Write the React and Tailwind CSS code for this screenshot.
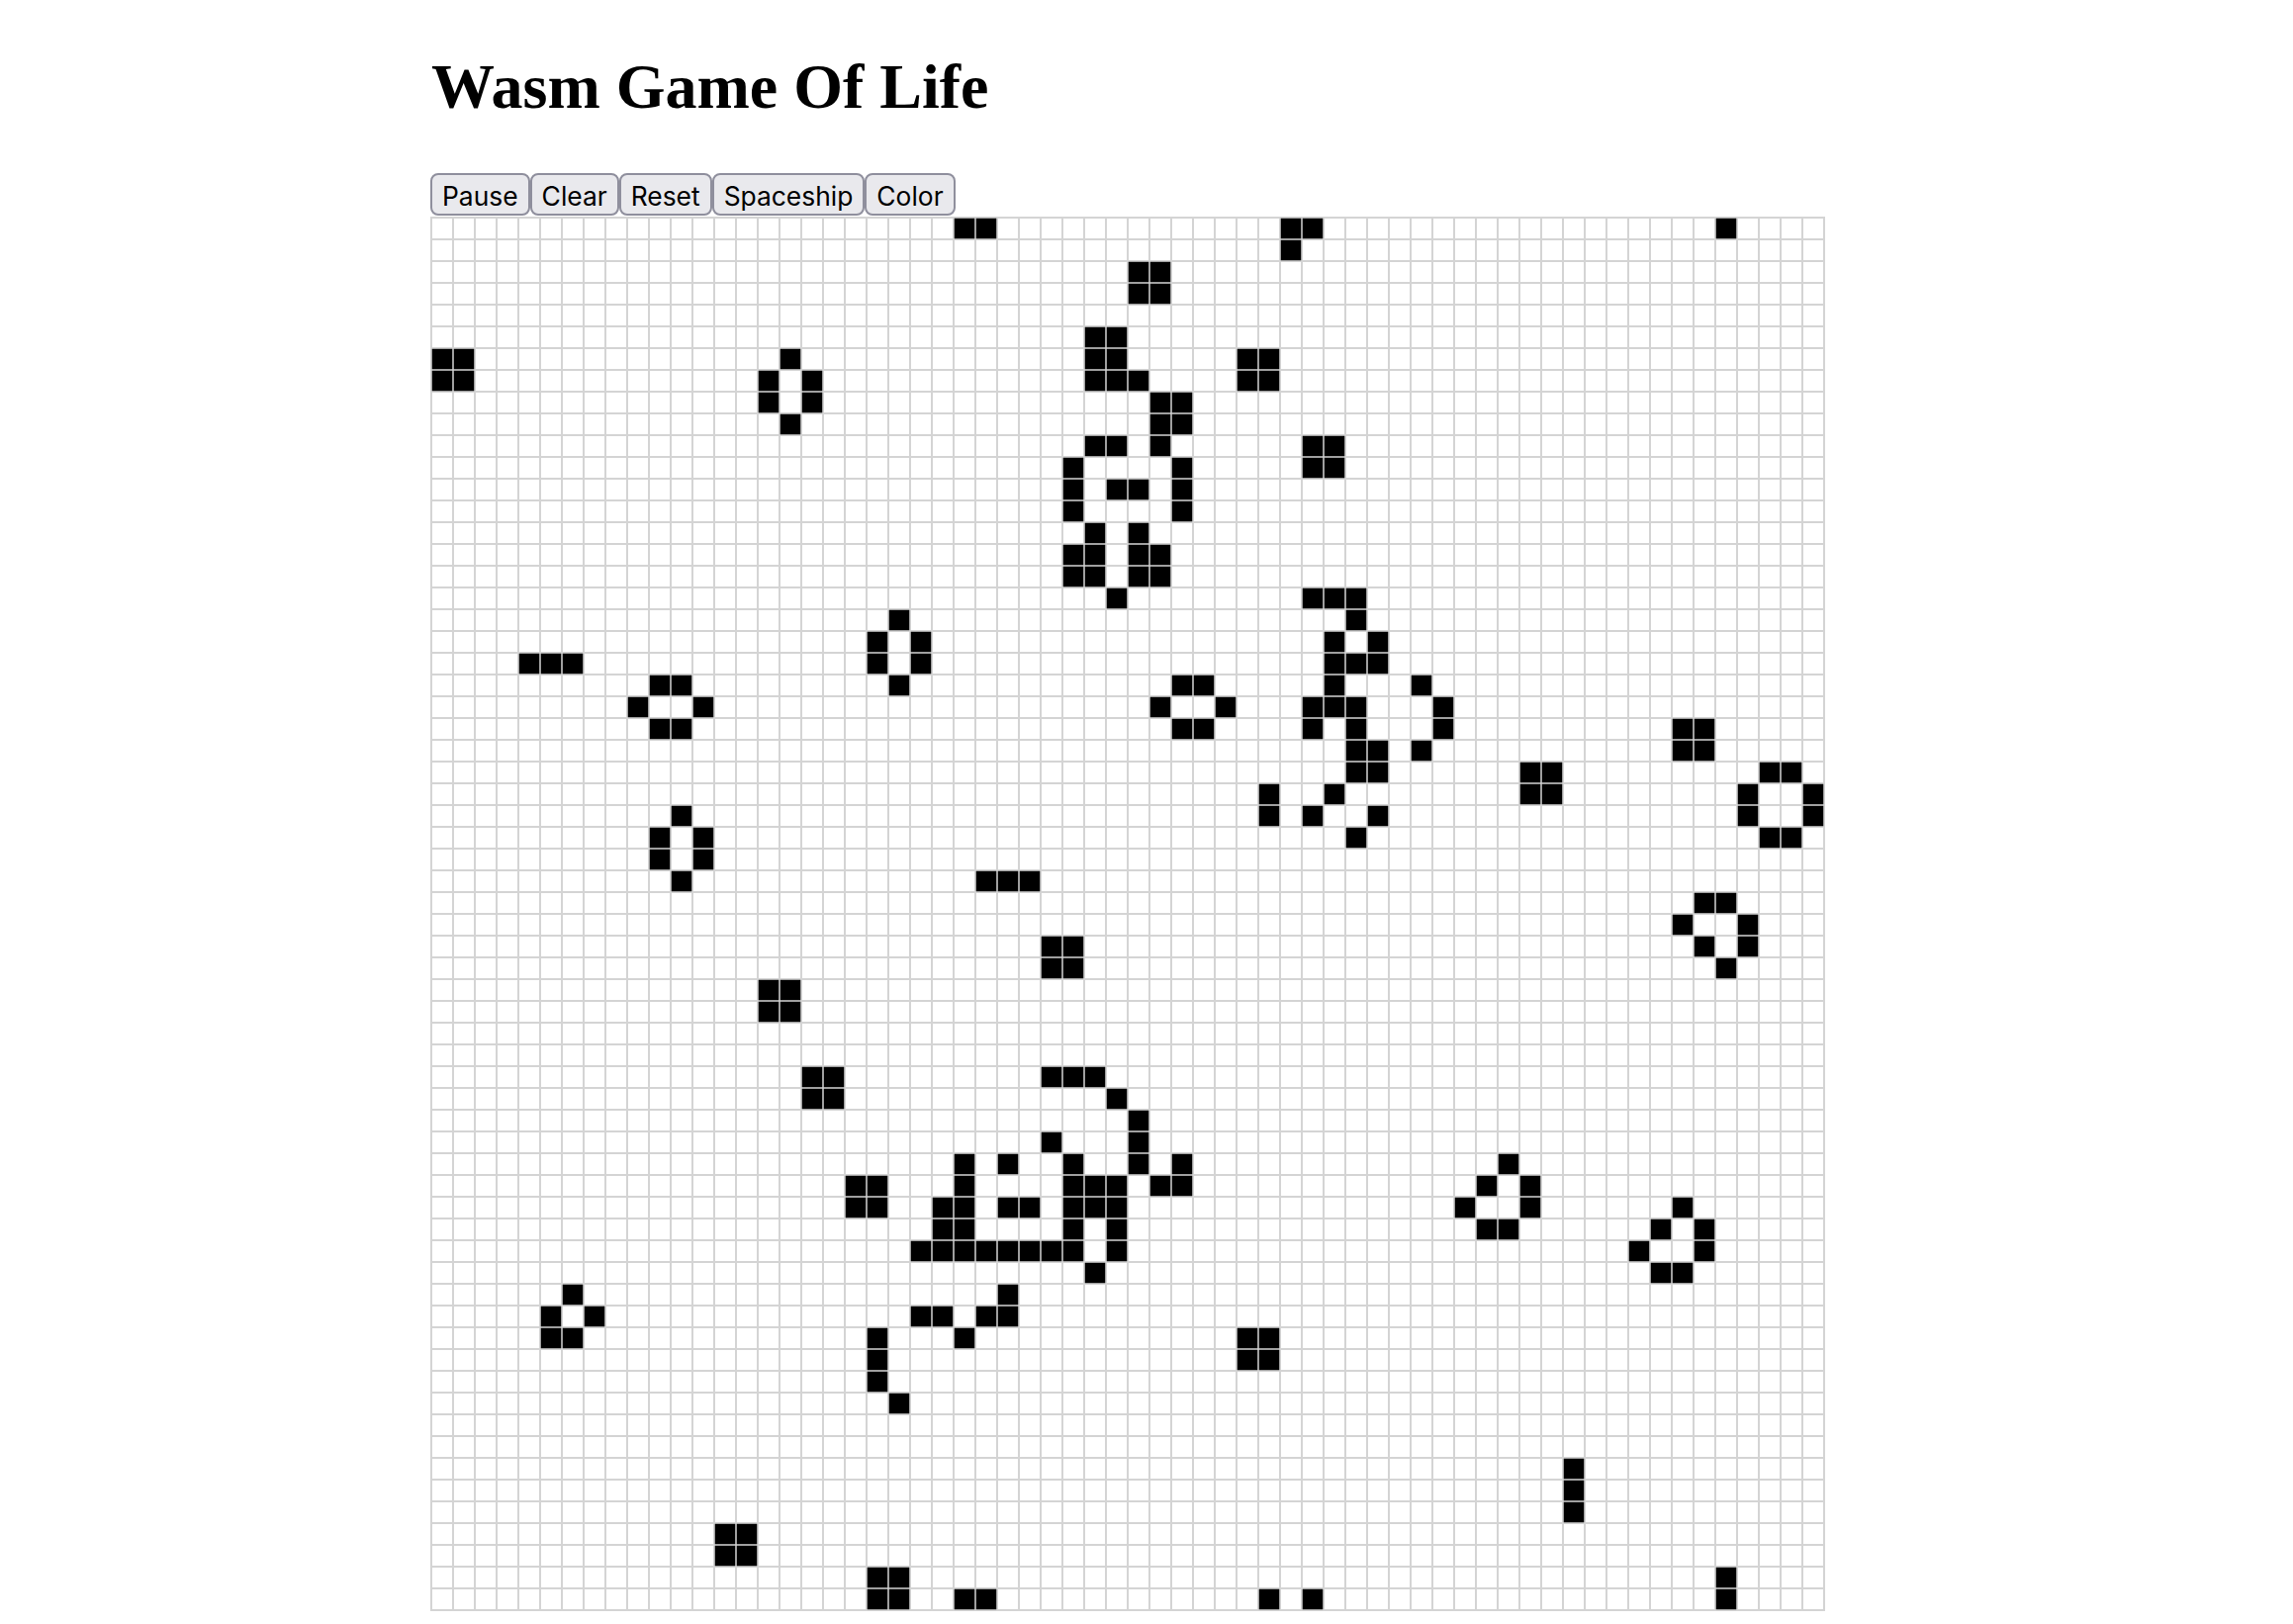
const PITCH = 22;
const SIZE = 64;

// live cells per row: [row, [cols]]
const LIVE = {
  0: [24, 25, 39, 40, 59],
  1: [39],
  2: [32, 33],
  3: [32, 33],
  5: [30, 31],
  6: [0, 1, 16, 30, 31, 37, 38],
  7: [0, 1, 15, 17, 30, 31, 32, 37, 38],
  8: [15, 17, 33, 34],
  9: [16, 33, 34],
  10: [30, 31, 33, 40, 41],
  11: [29, 34, 40, 41],
  12: [29, 31, 32, 34],
  13: [29, 34],
  14: [30, 32],
  15: [29, 30, 32, 33],
  16: [29, 30, 32, 33],
  17: [31, 40, 41, 42],
  18: [21, 42],
  19: [20, 22, 41, 43],
  20: [4, 5, 6, 20, 22, 41, 42, 43],
  21: [10, 11, 21, 34, 35, 41, 45],
  22: [9, 12, 33, 36, 40, 41, 42, 46],
  23: [10, 11, 34, 35, 40, 42, 46, 57, 58],
  24: [42, 43, 45, 57, 58],
  25: [42, 43, 50, 51, 61, 62],
  26: [38, 41, 50, 51, 60, 63],
  27: [11, 38, 40, 43, 60, 63],
  28: [10, 12, 42, 61, 62],
  29: [10, 12],
  30: [11, 25, 26, 27],
  31: [58, 59],
  32: [57, 60],
  33: [28, 29, 58, 60],
  34: [28, 29, 59],
  35: [15, 16],
  36: [15, 16],
  39: [17, 18, 28, 29, 30],
  40: [17, 18, 31],
  41: [32],
  42: [28, 32],
  43: [24, 26, 29, 32, 34, 49],
  44: [19, 20, 24, 29, 30, 31, 33, 34, 48, 50],
  45: [19, 20, 23, 24, 26, 27, 29, 30, 31, 47, 50, 57],
  46: [23, 24, 29, 31, 48, 49, 56, 58],
  47: [22, 23, 24, 25, 26, 27, 28, 29, 31, 55, 58],
  48: [30, 56, 57],
  49: [6, 26],
  50: [5, 7, 22, 23, 25, 26],
  51: [5, 6, 20, 24, 37, 38],
  52: [20, 37, 38],
  53: [20],
  54: [21],
  57: [52],
  58: [52],
  59: [52],
  60: [13, 14],
  61: [13, 14],
  62: [20, 21, 59],
  63: [20, 21, 24, 25, 38, 40, 59],
};

const Board = () => {
  const lines = [];
  for (let i = 0; i <= SIZE; i++) {
    const p = 1 + i * PITCH;
    lines.push(`M${p} 0V1410M0 ${p}H1410`);
  }

  const cells = [];
  Object.entries(LIVE).forEach(([row, cols]) => {
    cols.forEach((col) => {
      cells.push(
        <rect
          key={`${row}-${col}`}
          x={1.75 + col * PITCH}
          y={1.75 + Number(row) * PITCH}
          width="20.5"
          height="20.5"
          fill="#000000"
        />
      );
    });
  });

  return (
    <svg className="block mt-px" width="1410" height="1410" viewBox="0 0 1410 1410">
      <path d={lines.join('')} stroke="#d4d4d4" strokeWidth="2" fill="none" />
      {cells}
    </svg>
  );
};

const BUTTONS = ['Pause', 'Clear', 'Reset', 'Spaceship', 'Color'];

const App = () => {
  return (
    <div className="min-h-[1642px] bg-white pl-[435px]">
      <h1 className="pt-[51px] pl-px mb-[50px] text-[64px] leading-[74px] font-bold text-black font-['Liberation_Serif',serif]">
        Wasm Game Of Life
      </h1>
      <div className="flex">
        {BUTTONS.map((label) => (
          <button
            key={label}
            className="h-[43px] px-[10px] pt-[3px] bg-[#e9e9ed] border-2 border-[#8f8f9d] rounded-lg text-[26.4px] leading-none text-black font-['Inter',sans-serif]"
          >
            {label}
          </button>
        ))}
      </div>
      <Board />
    </div>
  );
};

export default App;
